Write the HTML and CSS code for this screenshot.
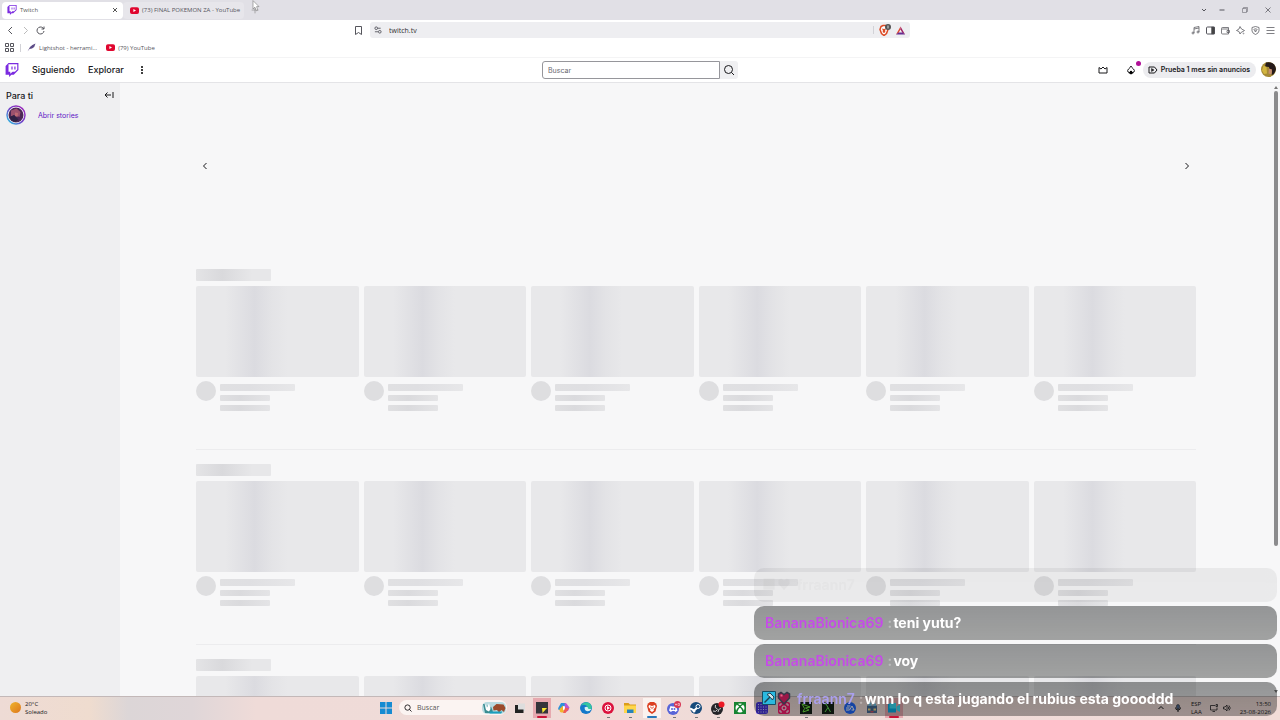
FILE: index.html
```
<!DOCTYPE html>
<html lang="es">
<head>
    <meta charset="UTF-8">
    <meta name="viewport" content="width=device-width, initial-scale=1.0">
    <title>Twitch</title>
    <link rel="stylesheet" href="styles.css">
</head>
<body>
    <svg class="defs" aria-hidden="true">
        <symbol id="glitch" viewBox="0 0 24 24"><path fill="#fff" d="M6 2h15v12l-6 6h-4l-4 3z"/><path fill="#7b2be0" d="M6 0 1 5v15h6v4l4-4h4l8-8V0zm15 11-4 4h-4l-4 3.500v-3.500H6V2h15z"/><path fill="#7b2be0" d="M11 6h2v5h-2zm5 0h2v5h-2z"/></symbol>
        <symbol id="youtube" viewBox="0 0 24 18"><rect width="24" height="18" rx="5" fill="#e0062f"/><path fill="#fff" d="M9 5v8l7-4z"/></symbol>
    </svg>

    <nav class="tabs" aria-label="Pestañas">
        <div class="tab active">
            <svg class="i10"><use href="#glitch"/></svg>
            <span>Twitch</span>
            <button class="end" aria-label="Cerrar"><svg class="i6 line" viewBox="0 0 12 12"><path stroke-width="2" d="m2 2 8 8M10 2l-8 8"/></svg></button>
        </div>
        <div class="tab">
            <svg class="i9"><use href="#youtube"/></svg>
            <span>(73) FINAL POKEMON ZA - YouTube</span>
        </div>
        <button class="new-tab" aria-label="Nueva pestaña"><svg class="i8 line" viewBox="0 0 12 12"><path d="M6 1v10M1 6h10"/></svg></button>
        <div class="window-buttons">
            <button aria-label="Buscar pestañas"><svg class="i6 line" viewBox="0 0 12 12"><path stroke-width="2" d="m2 4 4 4 4-4"/></svg></button>
            <button aria-label="Minimizar"><svg class="i6 line" viewBox="0 0 12 12"><path stroke-width="2" d="M1 6h10"/></svg></button>
            <button aria-label="Restaurar"><svg class="i6 line" viewBox="0 0 12 12"><path d="M1 3h8v8H1zM3 3V1h8v8H9"/></svg></button>
            <button aria-label="Cerrar"><svg class="i6 line" viewBox="0 0 12 12"><path stroke-width="1.500" d="m1 1 10 10M11 1 1 11"/></svg></button>
        </div>
        <svg class="cursor" viewBox="0 0 12 20"><path fill="#fff" stroke="#777" d="M1 1v14l3-3 3 6 2-1-2-6h4z"/></svg>
    </nav>

    <div class="toolbar">
        <div class="nav-buttons">
            <button aria-label="Atrás"><svg class="i9 line" viewBox="0 0 18 18"><path stroke-width="2" d="m12 2-7 7 7 7"/></svg></button>
            <button class="off" aria-label="Adelante"><svg class="i9 line" viewBox="0 0 18 18"><path stroke-width="2" d="m6 2 7 7-7 7"/></svg></button>
            <button aria-label="Recargar"><svg class="i9 line" viewBox="0 0 18 18"><path stroke-width="2" d="M16 10a7 7 0 1 1-2-6l2 2M16 1v5h-5"/></svg></button>
            <button class="end" aria-label="Marcador"><svg class="i9 line" viewBox="0 0 18 18"><path stroke-width="2" d="M3 1h12v16l-6-4-6 4z"/></svg></button>
        </div>
        <div class="address">
            <svg class="i8 line" viewBox="0 0 18 18"><path stroke-width="2" d="M8 5h7M2 13h7"/><circle cx="5" cy="5" r="3" stroke-width="2"/><circle cx="13" cy="13" r="3" stroke-width="2"/></svg>
            <input type="text" aria-label="Dirección" value="twitch.tv">
            <span class="divider"></span>
            <button aria-label="Brave Shields"><svg class="i12" viewBox="0 0 24 24"><path fill="#fff" stroke="#dd4b26" stroke-width="3" d="m4 5 4-2h5l4 3 1 5-3 8-5 4-5-4-3-8z"/><path fill="#dd4b26" d="m6 9 4 1 4-1-2 5 1 2-3 2-3-2 1-2z"/><circle cx="18" cy="6" r="6" fill="#555"/><path fill="#ddd" d="M17 3h2v6h-2z"/></svg></button>
            <button aria-label="Brave Rewards"><svg class="i9" viewBox="0 0 18 18"><path fill="#e3482f" d="M9 1 0 17l5-3 4-7z"/><path fill="#9e1f63" d="m9 1 9 16-5-3-4-7z"/><path fill="#662d91" d="M0 17h18l-5-4H5z"/></svg></button>
        </div>
        <div class="extensions">
            <button aria-label="Música"><svg class="i9 line" viewBox="0 0 18 18"><path stroke-width="1.500" d="M6 14V3l10-2v11M6 6l10-2"/><circle cx="4" cy="14" r="2" stroke-width="1.500"/><circle cx="14" cy="12" r="2" stroke-width="1.500"/></svg></button>
            <button aria-label="Panel lateral"><svg class="i9 line" viewBox="0 0 18 18"><rect x="1" y="2" width="16" height="14" rx="2" stroke-width="2"/><path fill="#444" d="M11 2h6v14h-6z"/></svg></button>
            <button aria-label="Cartera"><svg class="i9 line" viewBox="0 0 18 18"><path stroke-width="1.500" d="M15 6V3H3a2 2 0 0 0-2 2v9q0 2 2 2h12V6H2m15 3h-5v4h5z"/></svg></button>
            <button aria-label="Leo"><svg class="i9 line" viewBox="0 0 18 18"><path stroke-width="1.500" d="m8 1 3 5 6 3-3 2-3 1-3 4-2-5-5-2 5-3z"/><circle cx="15" cy="15" r="1"/></svg></button>
            <button aria-label="VPN"><svg class="i9 line" viewBox="0 0 18 18"><path stroke-width="1.500" d="m9 1 7 2v7q-1 5-7 7-6-2-7-7V3z"/><path stroke-width="1.500" d="M5 7q4-3 8 0M7 9q2-1 4 0l-2 3z"/></svg></button>
            <button aria-label="Menú"><svg class="i9 line" viewBox="0 0 18 18"><path stroke-width="1.500" d="M1 3h16M1 9h16M1 15h16"/></svg></button>
        </div>
    </div>

    <div class="bookmarks">
        <svg class="i9 line" viewBox="0 0 18 18"><path stroke-width="2" d="M1 1h6v6H1zM11 1h6v6h-6zM1 11h6v6H1zM11 11h6v6h-6z"/></svg>
        <span class="divider"></span>
        <a href="#"><svg class="i9" viewBox="0 0 18 18"><path fill="#5b4a86" d="M1 17 6 8Q10 3 17 1q-1 7-7 10l-5 1z"/></svg>Lightshot - herrami...</a>
        <a href="#"><svg class="i9"><use href="#youtube"/></svg>(79) YouTube</a>
    </div>

    <header class="site-header">
        <nav class="site-nav">
            <a href="#" aria-label="Twitch"><svg class="i14"><use href="#glitch"/></svg></a>
            <a href="#">Siguiendo</a>
            <a href="#">Explorar</a>
            <button aria-label="Más"><svg class="i10" viewBox="0 0 20 20"><circle cx="10" cy="4" r="2"/><circle cx="10" cy="10" r="2"/><circle cx="10" cy="16" r="2"/></svg></button>
        </nav>
        <form class="search">
            <input type="text" placeholder="Buscar" aria-label="Buscar">
            <button type="button" aria-label="Buscar"><svg class="i12 line" viewBox="0 0 24 24"><circle cx="11" cy="11" r="8" stroke-width="2"/><path stroke-width="2" d="m17 17 5 5"/></svg></button>
        </form>
        <div class="account">
            <button aria-label="Prime"><svg class="i10 line" viewBox="0 0 20 20"><path stroke-width="2" d="m2 5 4 3 4-4 4 4 4-3v11H2z"/></svg></button>
            <button class="drops" aria-label="Notificaciones"><svg class="i10" viewBox="0 0 20 20"><path fill="none" stroke="#18181b" stroke-width="2" d="M10 2q-1 3-5 6-3 3-1 6l3 1 3-3 3 3 3-1q2-3-1-6-4-3-5-6z"/><path d="m10 11 5 5-5 3-5-3z"/></svg><span class="dot"></span></button>
            <button class="ad-free"><svg class="i10 line" viewBox="0 0 20 20"><path stroke-width="2" d="M2 4h11l5 6-5 6H2z"/><path fill="#18181b" d="M7 7v6l5-3z"/></svg>Prueba 1 mes sin anuncios</button>
            <button aria-label="Cuenta"><svg class="i15" viewBox="0 0 30 30"><circle cx="15" cy="15" r="15" fill="#a58a36"/><path fill="#251a1a" d="M10 1q17-3 20 13-2 11-9 12l1-8-5-2-1-6-8-1z"/><path fill="#c58e72" d="m16 13 6 2-1 10-6-2z"/><path fill="#d3b640" d="m5 7 6 3 1 13-6 1-4-7z"/></svg></button>
        </div>
    </header>

    <div class="content">
        <aside class="sidebar">
            <div class="side-title">
                <h2>Para ti</h2>
                <button aria-label="Contraer"><svg class="i10 line" viewBox="0 0 20 20"><path stroke-width="2" d="M18 4v12M14 10H2m5-5-5 5 5 5"/></svg></button>
            </div>
            <a class="story" href="#">
                <svg class="i20" viewBox="0 0 40 40"><defs><linearGradient id="ring" x1="0" y1="1" x2="1" y2="0"><stop stop-color="#25cde5"/><stop offset=".5" stop-color="#7540c8"/><stop offset="1" stop-color="#a52ab8"/></linearGradient></defs><circle cx="20" cy="20" r="18" fill="#fff" stroke="url(#ring)" stroke-width="3"/><circle cx="20" cy="20" r="15" fill="#4d2857"/><path fill="#9d526d" d="m10 11 11-4 8 7-2 10-8-4-9 3z"/><path fill="#302244" d="m7 24 9-4 9 9-6 5-8-3z"/><path fill="#c16b73" d="m18 15 6 1-1 8-5-2z"/></svg>
                Abrir stories
            </a>
        </aside>
        <main class="feed">
            <div class="carousel">
                <button aria-label="Anterior"><svg class="i10 line" viewBox="0 0 20 20"><path stroke-width="2" d="m13 4-6 6 6 6"/></svg></button>
                <button aria-label="Siguiente"><svg class="i10 line" viewBox="0 0 20 20"><path stroke-width="2" d="m7 4 6 6-6 6"/></svg></button>
            </div>
            <div id="shelves"></div>
        </main>
        <div class="scrollbar"><i class="up"></i><span class="thumb"></span><i class="down"></i></div>
    </div>

    <footer class="taskbar">
        <div class="weather">
            <span class="sun"></span>
            <p>20°C<br>Soleado</p>
        </div>
        <div class="apps">
            <button class="app" aria-label="Inicio"><svg class="i12" viewBox="0 0 24 24"><path fill="#168bd2" d="M0 0h11v11H0zM13 0h11v11H13zM0 13h11v11H0zM13 13h11v11H13z"/></svg></button>
            <label class="task-search">
                <svg class="i8 line" viewBox="0 0 18 18"><circle cx="8" cy="8" r="6" stroke-width="2"/><path stroke-width="2" d="m12 12 5 5"/></svg>
                <input type="text" placeholder="Buscar" aria-label="Buscar en Windows">
                <svg class="scene" viewBox="0 0 48 24"><rect width="48" height="24" rx="10" fill="#b9dbe0"/><path fill="#398c91" d="M2 4h3l3 11 3-9 3 11 4-8 4 10-5 3H6z"/><path fill="#fff" d="m6 4 4 7 4-8 3 11-3 5-6-3z"/><path fill="#9b4b2b" d="m22 10 7-6 14 1 4 7-3 8-5-4-5 5-4-5-7 1z"/><path fill="#1a9ebd" d="M16 19h25l-3 4H15z"/></svg>
            </label>
            <button class="app" aria-label="Vista de tareas"><svg class="i12" viewBox="0 0 24 24"><path fill="#ddd" d="M8 3h14v15H8z"/><path fill="#222" d="M2 6h6v9h11v7H2z"/></svg></button>
            <button class="app open red" aria-label="Notas"><svg class="i12" viewBox="0 0 24 24"><path fill="#34353a" d="M0 0h24v23H0z"/><path fill="#f8e932" d="M12 12h10l-9 10z"/></svg></button>
            <button class="app" aria-label="Copilot"><svg class="i12" viewBox="0 0 24 24"><path fill="#2b91db" d="M6 2h10l-6 14H3q-4 0-2-5z"/><path fill="#f2b62c" d="m3 14 7-7 2 14H7q-4 0-4-7z"/><path fill="#bd55d0" d="m13 2 4 1 6 8-3 7-5 1z"/><path fill="#f15d55" d="M10 22h5l7-9-8-2z"/><path fill="#fff" d="m10 8 4 1-1 6-3 1z"/></svg></button>
            <button class="app" aria-label="Edge"><svg class="i12" viewBox="0 0 24 24"><circle cx="12" cy="12" r="12" fill="#1478ca"/><path fill="#36c6a0" d="M2 8Q8-3 18 2q7 4 5 12H12l3-5Q9 3 2 8z"/><path fill="#d8f2f4" d="M9 11q6-4 8 3h6q-6 8-13 2z"/></svg></button>
            <button class="app run" aria-label="YouTube Music"><svg class="i12" viewBox="0 0 24 24"><circle cx="12" cy="12" r="12" fill="#dc123d"/><circle cx="12" cy="12" r="6" fill="none" stroke="#fff" stroke-width="2"/><path fill="#fff" d="M10 8v8l6-4z"/></svg></button>
            <button class="app run" aria-label="Explorador"><svg class="i12" viewBox="0 0 24 24"><path fill="#dc9d1a" d="M0 2h9l3 3h12v17H0z"/><path fill="#ffd64b" d="M0 7h24v15H0z"/><path fill="#2683bb" d="M6 15h13v7H6z"/></svg></button>
            <button class="app open blue" aria-label="Brave"><svg class="i12" viewBox="0 0 24 24"><path fill="#dc3f20" d="m4 3 4-3h8l4 3 2 5-3 11-7 5-7-5L2 8z"/><path fill="#fff" d="m6 6 6 2 6-2 1 4-4 5 1 2-4 3-4-3 1-2-4-5z"/><path fill="#dc3f20" d="m8 9 3 1v5zM16 9l-3 1v5z"/></svg></button>
            <button class="app run" aria-label="Discord"><svg class="i14" viewBox="0 0 28 28"><circle cx="12" cy="16" r="12" fill="#5865d8"/><path fill="#fff" d="m7 10 4 1h3l4-1 3 9-4 3-2-2h-5l-2 2-4-3z"/><circle cx="10" cy="16" r="2" fill="#5865d8"/><circle cx="15" cy="16" r="2" fill="#5865d8"/><circle cx="21" cy="7" r="7" fill="#d73755"/><path fill="none" stroke="#fff" d="M16 7h4M18 5v4m4-4h3v4h-3z"/></svg></button>
            <button class="app run" aria-label="Steam"><svg class="i12" viewBox="0 0 24 24"><circle cx="12" cy="12" r="12" fill="#164a7b"/><path fill="none" stroke="#fff" stroke-width="4" d="m0 13 8 4 7-6"/><circle cx="16" cy="9" r="4" fill="#164a7b" stroke="#fff" stroke-width="2"/><circle cx="8" cy="18" r="3" fill="#fff"/></svg></button>
            <button class="app run" aria-label="OBS"><svg class="i14" viewBox="0 0 28 28"><circle cx="12" cy="16" r="12" fill="#252529"/><path fill="none" stroke="#ccc" stroke-width="2" d="M9 8q-3 6 4 8m7-1q-6 0-6 7M4 20q6 3 9-3"/><circle cx="21" cy="7" r="6" fill="#ed1824"/></svg></button>
            <button class="app" aria-label="Xbox"><svg class="i12" viewBox="0 0 24 24"><path fill="#188432" d="M0 0h24v24H0z"/><circle cx="12" cy="12" r="9" fill="#fff"/><path fill="none" stroke="#188432" stroke-width="3" d="M5 20q2-7 7-11 5 4 7 11M6 4l6 4 6-4"/></svg></button>
            <button class="app" aria-label="Aplicaciones"><svg class="i12" viewBox="0 0 24 24"><rect width="24" height="24" rx="5" fill="#4a35e0"/><path stroke="#d4d7ff" stroke-width="2" stroke-dasharray="2 3" d="M4 5h17M4 10h17M4 15h17M4 20h17"/></svg></button>
            <button class="app" aria-label="Cámara"><svg class="i12" viewBox="0 0 24 24"><rect width="24" height="24" rx="4" fill="#ff1c70"/><path fill="none" stroke="#fff" stroke-width="2" d="M4 8V4h4m8 0h4v4M4 16v4h4m8 0h4v-4"/><circle cx="12" cy="12" r="4" fill="none" stroke="#fff" stroke-width="2"/></svg></button>
            <button class="app run" aria-label="Editor"><svg class="i12" viewBox="0 0 24 24"><path fill="#142017" d="M0 0h24v24H0z"/><path fill="none" stroke="#73ef42" stroke-width="2" d="m4 4 16 6-9 2 7 4-12 4 3-7z"/></svg></button>
            <button class="app" aria-label="Terminal"><svg class="i12" viewBox="0 0 24 24"><path fill="#142017" d="M0 0h24v24H0z"/><path fill="none" stroke="#64e455" stroke-width="2" d="m8 4 9 16M12 11l-6 9M5 4h4"/></svg></button>
            <button class="app" aria-label="EA"><svg class="i12" viewBox="0 0 24 24"><circle cx="12" cy="12" r="12" fill="#2068ff"/><path fill="none" stroke="#fff" stroke-width="2" d="M6 8h7M4 12h7m-7 4h7l5-8 4 8h-5"/></svg></button>
            <button class="app" aria-label="Juego"><svg class="i12" viewBox="0 0 24 24"><path fill="#496e98" d="M2 7h20v15H2z"/><path fill="#75c4e5" d="M5 1h6v7H5zM15 3h5v5h-5z"/><path fill="#f2d989" d="M4 13h5v4H4zM15 13h5v4h-5z"/><path fill="#cf5065" d="M9 18h6v3H9z"/></svg></button>
            <button class="app open red" aria-label="Grabadora"><svg class="i12" viewBox="0 0 24 24"><path fill="#08b0e8" d="M0 4h16v17H0z"/><path fill="#39e0fa" d="M3 2h13v11H3zM17 9l7-4v15l-7-4z"/></svg></button>
        </div>
        <div class="tray">
            <svg class="i8 line" viewBox="0 0 16 16"><path stroke-width="2" d="m3 10 5-5 5 5"/></svg>
            <svg class="i8 line" viewBox="0 0 16 16"><rect x="5" y="1" width="6" height="9" rx="3" fill="#536a91"/><path stroke-width="2" d="M3 7q0 5 5 5t5-5M8 12v4"/></svg>
            <p class="lang">ESP<br>LAA</p>
            <svg class="i8 line" viewBox="0 0 16 16"><path stroke-width="1.500" d="M10 3H1v9h13V7M5 15h5M12 1h3v4h-3z"/></svg>
            <svg class="i8 line" viewBox="0 0 16 16"><path stroke-width="1.500" d="M1 6h3l4-4v12l-4-4H1zM10 5q3 3 0 6M12 3q5 5 0 10"/></svg>
            <p class="clock">13:50<br>23-08-2026</p>
        </div>
    </footer>

    <section class="chat" aria-label="Chat">
        <p class="message fading">
            <span class="badges">
                <svg class="i14" viewBox="0 0 28 28"><path d="M3 3h22v22H3z"/></svg>
                <svg class="i14" viewBox="0 0 28 28"><path d="M14 26 3 14V6l5-3 6 4 6-4 5 3v8z"/></svg>
            </span>
            <b class="fran">frraann7</b>
        </p>
        <p class="message"><b class="banana">BananaBionica69</b><i>:</i><span>teni yutu?</span></p>
        <p class="message"><b class="banana">BananaBionica69</b><i>:</i><span>voy</span></p>
        <p class="message">
            <span class="badges">
                <svg class="i14" viewBox="0 0 28 28"><path fill="#2bb9df" stroke="#174f64" stroke-width="2" d="M1 1h26v26H1z"/><path fill="none" stroke="#213f4f" stroke-width="3" d="m5 23 13-13"/><path fill="#cfe6ea" stroke="#213f4f" stroke-width="2" d="m10 7 6-3 8 8-3 6-4-5z"/></svg>
                <svg class="i14" viewBox="0 0 28 28"><path fill="#9a1747" stroke="#36394a" stroke-width="3" d="M14 26 3 14V6l5-3 6 4 6-4 5 3v8z"/><path fill="#e96a8a" d="M7 7h4v4H7z"/></svg>
            </span>
            <b class="fran">frraann7</b><i>:</i><span>wnn lo q esta jugando el rubius esta goooddd</span>
        </p>
    </section>

    <script>
        const card = `
            <div class="card">
                <div class="thumbnail"></div>
                <div class="info">
                    <span class="face"></span>
                    <div class="lines"><span class="bar wide"></span><span class="bar"></span><span class="bar"></span></div>
                </div>
            </div>`;
        const shelf = `<section class="shelf"><div class="shelf-title"></div><div class="cards">${card.repeat(6)}</div></section>`;
        document.getElementById('shelves').innerHTML = shelf.repeat(3);
    </script>
</body>
</html>
```
FILE: styles.css
```
* { box-sizing: border-box; margin: 0; padding: 0; }
body {
    font-family: Inter, "Liberation Sans", sans-serif; background: #f7f7f8; color: #18181b;
    display: flex; flex-direction: column; height: 100vh; overflow: hidden;
}
button { background: none; border: none; color: inherit; font: inherit; display: flex; align-items: center; justify-content: center; cursor: pointer; }
input { border: none; background: none; color: inherit; font: inherit; min-width: 0; outline: none; }
a { color: inherit; text-decoration: none; }
svg { display: block; flex: none; }
.defs { position: absolute; width: 0; height: 0; }
.line { fill: none; stroke: currentColor; }
.i6 { width: 6px; height: 6px; }
.i8 { width: 8px; height: 8px; }
.i9 { width: 9px; height: 9px; }
.i10 { width: 10px; height: 10px; }
.i12 { width: 12px; height: 12px; }
.i14 { width: 14px; height: 14px; }
.i15 { width: 15px; height: 15px; }
.i20 { width: 20px; height: 20px; }
.end { margin-left: auto; }
.divider { width: 1px; height: 8px; background: #d2d2d7; }

/* browser */
.tabs, .toolbar, .bookmarks { font-family: "Open Sans", sans-serif; font-size: 7px; color: #55555c; flex: none; }
.tabs { display: flex; align-items: center; height: 20px; padding: 0 2px; background: #e1e0e6; position: relative; }
.tab { display: flex; align-items: center; gap: 3px; width: 121px; height: 17px; padding: 0 5px; border-radius: 4px; white-space: nowrap; font-size: 6px; }
.tab.active { background: #fff; color: #555; }
.tab + .tab { background: #e7e6eb; padding-left: 7px; }
.new-tab { width: 22px; color: #888; }
.window-buttons { margin-left: auto; display: flex; gap: 11px; padding-right: 4px; }
.window-buttons button { width: 12px; }
.window-buttons button:first-child { margin-right: -5px; }
.cursor { position: absolute; left: 252px; top: 0; width: 8px; height: 12px; }
.toolbar { display: grid; grid-template-columns: 1fr minmax(0, 540px) 1fr; align-items: center; height: 20px; background: #fff; }
.nav-buttons { display: flex; gap: 6px; padding: 0 7px 0 6px; }
.nav-buttons .off { color: #bbb; }
.address { display: flex; align-items: center; gap: 5px; height: 16px; padding: 0 5px 0 4px; background: #eeeef1; border-radius: 3px; }
.address input { flex: 1; padding-left: 2px; color: #333; }
.extensions { display: flex; justify-content: flex-end; gap: 6px; padding-right: 5px; }
.bookmarks { display: flex; align-items: center; gap: 6px; height: 17px; padding: 0 5px 2px; background: #fff; font-size: 6px; }
.bookmarks a { display: flex; align-items: center; gap: 3px; margin-right: 3px; }

/* site header */
.site-header {
    display: grid; grid-template-columns: 1fr minmax(0, 196px) 1fr; align-items: center; flex: none;
    height: 26px; background: #fff; border-top: 1px solid #f4f4f5; border-bottom: 1px solid #e4e4e7;
}
.site-nav { display: flex; align-items: center; gap: 13px; padding: 0 0 1px 5px; font-size: 9px; font-weight: 500; }
.search { display: flex; height: 18px; font-size: 7px; }
.search input { flex: 1; border: 1px solid #96969b; border-radius: 3px 0 0 3px; padding: 0 5px; }
.search input::placeholder { color: #66666e; }
.search button { width: 18px; background: #f0f0f2; border-radius: 0 3px 3px 0; }
.account { display: flex; align-items: center; justify-content: flex-end; gap: 5px; padding: 0 4px 1px 0; }
.account > button:first-child { margin-right: 13px; }
.drops { position: relative; margin-right: 2px; }
.dot { position: absolute; right: -5px; top: -4px; width: 5px; height: 5px; border-radius: 50%; background: #b01097; }
.account .ad-free { gap: 3px; height: 16px; padding: 0 6px 0 5px; background: #ececef; border-radius: 8px; font-size: 7px; font-weight: 600; white-space: nowrap; }

/* page */
.content { display: flex; flex: 1; min-height: 0; }
.sidebar { width: 120px; flex: none; background: #efeff1; padding: 6px; }
.side-title { display: flex; align-items: center; justify-content: space-between; height: 12px; }
.side-title h2 { font-size: 9px; font-weight: 500; }
.story { display: flex; align-items: center; gap: 12px; margin-top: 4px; color: #5c16c5; font-size: 7px; }
.feed { flex: 1; min-width: 0; padding: 0 76px; overflow: hidden; }
.carousel { display: flex; align-items: center; justify-content: space-between; height: 165px; margin-bottom: 21px; padding: 0 4px; }
.shelf { height: 181px; margin-bottom: 14px; border-bottom: 1px solid #ececee; }
.shelf-title { width: 75px; height: 12px; margin-bottom: 5px; background: linear-gradient(90deg, #e4e4e6, #d9d9dc 35%, #e7e7e9 75%); border-radius: 1px; }
.cards { display: grid; grid-template-columns: repeat(6, 1fr); gap: 5px; }
.thumbnail { aspect-ratio: 16 / 9; border-radius: 2px; background: linear-gradient(90deg, #e8e8ea 18%, #dbdbe0 36%, #e3e3e6 46%, #e8e8ea 56%); }
.info { display: flex; gap: 4px; margin-top: 4px; }
.face { width: 20px; height: 20px; border-radius: 50%; background: #dedee0; }
.lines { display: flex; flex-direction: column; gap: 4px; padding-top: 3px; }
.bar { width: 50px; height: 6px; border-radius: 1px; background: linear-gradient(90deg, #e0e0e2, #dadadd 40%, #e4e4e6); }
.bar.wide { width: 75px; height: 7px; background: linear-gradient(90deg, #e0e0e2, #dfdfe2 40%, #e7e7e9); }
.scrollbar { width: 8px; flex: none; display: flex; flex-direction: column; align-items: center; padding: 3px 0; }
.scrollbar .thumb { width: 4px; height: 75%; margin: 2px 0 auto; border-radius: 2px; background: #8b8b8d; }
.up, .down { border: 2px solid transparent; }
.up { border-top: 0; border-bottom: 3px solid #777; }
.down { border-bottom: 0; border-top: 3px solid #777; }

/* taskbar */
.taskbar {
    display: grid; grid-template-columns: 1fr auto 1fr; align-items: center; flex: none; height: 24px; padding-bottom: 2px;
    border-top: 1px solid #c3b8b8; font-family: "Open Sans", sans-serif; font-size: 6px; line-height: 8px;
    background: linear-gradient(90deg, #eedbd5, #efdccf 7%, #dcd6d7 10%, #dfd6d8 15%, #efdbd8 20%, #f1dcd8);
}
.weather { display: flex; align-items: center; gap: 4px; padding-left: 10px; }
.sun { width: 11px; height: 11px; border-radius: 50%; background: linear-gradient(135deg, #efb52c, #dd761d); }
.apps { display: flex; align-items: center; }
.app { width: 22px; height: 21px; position: relative; }
.task-search { display: flex; align-items: center; gap: 5px; width: 108px; height: 15px; margin: 0 2px; padding: 0 1px 0 5px; border-radius: 8px; background: #fbf4f2; font-size: 7px; }
.task-search input { flex: 1; width: 20px; }
.task-search input::placeholder { color: #555; }
.scene { width: 24px; height: 12px; }
.open { background: linear-gradient(#faf2ef, #faf2ef) center / 18px 20px no-repeat; }
.open.red { background-image: linear-gradient(#e6a9af, #e6a9af); }
.open::after, .run::after { content: ""; position: absolute; bottom: 0; width: 3px; height: 1px; background: #777; }
.open::after { width: 10px; height: 2px; border-radius: 1px; background: #ca1437; }
.blue::after { background: #2878ba; }
.tray { display: flex; align-items: center; justify-content: flex-end; gap: 5px; padding-right: 9px; }
.tray p { white-space: nowrap; }
.tray svg:first-child { margin-right: 4px; }
.lang { margin: 0 3px 0 4px; }
.clock { text-align: right; margin-left: 4px; }

/* chat overlay */
.chat { position: fixed; right: 3px; bottom: 4px; width: 523px; display: flex; flex-direction: column; gap: 4px; font-size: 14px; font-weight: 700; }
.message {
    display: flex; align-items: center; height: 34px; padding: 0 11px 2px; border-radius: 10px; color: #fff; white-space: nowrap;
    background: linear-gradient(rgba(0, 3, 3, .4), rgba(0, 3, 2, .35));
}
.message b { font-weight: 600; }
.message i { width: 10px; padding-left: 4px; font-style: normal; opacity: .3; }
.banana { color: #c54be8; }
.fran { color: #aaa0ee; }
.badges { display: flex; gap: 1px; width: 32px; margin-left: -3px; margin-right: 3px; }
.fading { opacity: .14; }
.fading .fran { color: #777; }
.fading .badges { fill: #666; }
```
